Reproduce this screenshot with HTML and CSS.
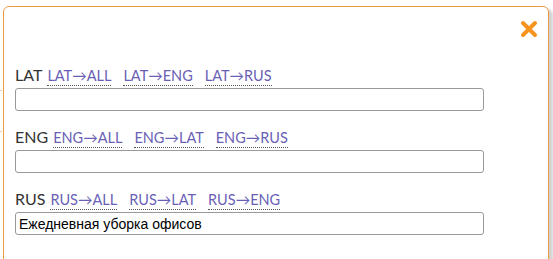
FILE: index.html
```html
<!DOCTYPE html>
<html>
<head>
<meta charset="utf-8">
<link rel="stylesheet" href="styles.css">
</head>
<body>
<div class="page-edge"></div>
<div class="modal">
  <div class="modal-head">
    <button class="close" aria-label="close">
      <svg width="18" height="18" viewBox="0 0 18 18"><path d="M3 3 L15 15 M15 3 L3 15" stroke="#f7941d" stroke-width="4" stroke-linecap="round"/></svg>
    </button>
  </div>
  <div class="rows">
    <div class="row">
      <div class="label-line"><span class="lang">LAT</span><a class="conv">LAT→ALL</a><a class="conv">LAT→ENG</a><a class="conv">LAT→RUS</a></div>
      <input class="field" type="text" value="">
    </div>
    <div class="row">
      <div class="label-line"><span class="lang">ENG</span><a class="conv">ENG→ALL</a><a class="conv">ENG→LAT</a><a class="conv">ENG→RUS</a></div>
      <input class="field" type="text" value="">
    </div>
    <div class="row">
      <div class="label-line"><span class="lang">RUS</span><a class="conv">RUS→ALL</a><a class="conv">RUS→LAT</a><a class="conv">RUS→ENG</a></div>
      <input class="field" type="text" value="Ежедневная уборка офисов">
    </div>
  </div>
</div>
</body>
</html>
```
FILE: styles.css
```css
html, body {
  margin: 0;
  padding: 0;
  background: #ffffff;
  overflow: hidden;
  height: 259px;
}
body {
  font-family: Lato, "Noto Sans", sans-serif;
  position: relative;
}
.page-edge {
  position: absolute;
  left: 0;
  top: 90px;
  width: 2px;
  height: 40px;
  border-top: 1px solid #f2c9a8;
  border-bottom: 1px solid #f2c9a8;
}
.modal {
  margin: 6px 0 0 3px;
  width: 544px;
  height: 300px;
  box-sizing: content-box;
  border: 1px solid #eb9a45;
  border-radius: 6px;
  background: #fff;
  box-shadow: 4px 3px 3px rgba(0,0,0,0.18);
  position: relative;
}
.modal-head {
  display: flex;
  justify-content: flex-end;
  padding: 13px 10px 0 0;
  height: 25px;
}
.close {
  border: 0;
  padding: 0;
  background: none;
  width: 18px;
  height: 18px;
  display: block;
}
.close svg { display: block; }
.rows {
  padding: 20px 0 0 11px;
  display: flex;
  flex-direction: column;
  gap: 16px;
}
.row {
  display: flex;
  flex-direction: column;
}
.label-line {
  display: flex;
  align-items: baseline;
  height: 23px;
  line-height: 19px;
}
.lang {
  font-size: 16px;
  color: #333;
  margin-right: 5px;
}
.conv {
  font-size: 14.5px;
  color: #6a5fb5;
  border-bottom: 1px dotted #555;
  padding-bottom: 1px;
  margin-right: 12px;
  line-height: 16px;
}
.field {
  width: 469px;
  height: 23px;
  box-sizing: border-box;
  border: 1px solid #999;
  border-radius: 3px;
  padding: 0 3px;
  font-family: "Liberation Sans", Arial, sans-serif;
  font-size: 14px;
  color: #000;
  margin: 0;
}
```
